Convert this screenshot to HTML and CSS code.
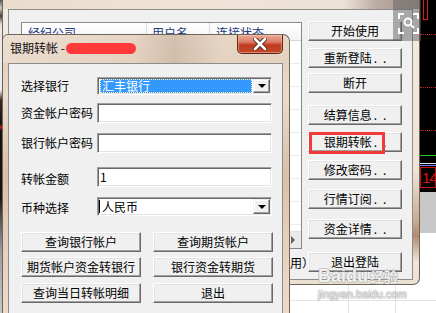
FILE: index.html
```html
<!DOCTYPE html>
<html lang="zh-CN">
<head>
<meta charset="utf-8">
<title>银期转帐</title>
<link rel="stylesheet" href="styles.css">
</head>
<body>
<div class="left-strip"></div>

<div class="chart">
  <div class="chart-top">
    <span class="c-mark"></span>
    <span class="c-dot d1"></span>
    <span class="c-dot d2"></span>
    <span class="c-dot d3"></span>
    <span class="c-green"></span>
    <span class="c-blue"></span>
  </div>
  <div class="chart-val">14</div>
  <div class="chart-grey"></div>
</div>

<div class="sheet"></div>

<div class="win back">
  <div class="back-panel">
    <div class="list-col">
      <div class="list">
        <div class="list-head">
          <span class="h1">经纪公司</span>
          <span class="h2">用户名</span>
          <span class="h3">连接状态</span>
        </div>
        <div class="list-body"></div>
        <div class="hscroll"><span class="hs-btn"><span class="hs-arrow"></span></span></div>
      </div>
      <div class="list-note">（可用）</div>
    </div>
    <div class="side">
      <button class="btn">开始使用</button>
      <button class="btn">重新登陆<span class="dots">..</span></button>
      <button class="btn">断开</button>
      <button class="btn">结算信息<span class="dots">..</span></button>
      <button class="btn">银期转帐<span class="dots">..</span></button>
      <button class="btn">修改密码<span class="dots">..</span></button>
      <button class="btn">行情订阅<span class="dots">..</span></button>
      <button class="btn">资金详情<span class="dots">..</span></button>
      <button class="btn">退出登陆</button>
    </div>
  </div>
</div>

<div class="highlight"></div>

<div class="zoom-icon">
  <svg width="28" height="41" viewBox="0 0 28 41">
    <g fill="none" stroke="#fff" stroke-width="2">
      <path d="M6 19 V14 H11"/>
      <path d="M20 14 H25 V19"/>
      <path d="M6 28 V33 H11"/>
      <path d="M20 33 H25 V28"/>
      <circle cx="15" cy="22" r="3.5"/>
      <path d="M17.5 24.5 L21 28"/>
    </g>
  </svg>
</div>

<div class="win dlg">
  <div class="dlg-title">
    <span class="dlg-name">银期转帐 -</span>
    <span class="redact"></span>
    <span class="close">
      <svg width="14" height="12" viewBox="0 0 14 12">
        <path d="M2 1 L12 11 M12 1 L2 11" stroke="#4a2a22" stroke-width="4.5" stroke-linecap="round"/>
        <path d="M2 1 L12 11 M12 1 L2 11" stroke="#fff" stroke-width="2.6" stroke-linecap="round"/>
      </svg>
    </span>
  </div>
  <div class="dlg-panel">
    <div class="form">
      <div class="row r1">
        <span class="lbl">选择银行</span>
        <div class="field combo"><span class="combo-val picked">汇丰银行</span><span class="drop"><span class="tri"></span></span></div>
      </div>
      <div class="row r2">
        <span class="lbl">资金帐户密码</span>
        <div class="field"></div>
      </div>
      <div class="row r3">
        <span class="lbl">银行帐户密码</span>
        <div class="field"></div>
      </div>
      <div class="row r4">
        <span class="lbl low">转帐金额</span>
        <div class="field text">1</div>
      </div>
      <div class="row r5">
        <span class="lbl low2">币种选择</span>
        <div class="field combo"><span class="combo-val plain">人民币</span><span class="drop"><span class="tri"></span></span></div>
      </div>
    </div>
    <div class="actions">
      <button class="btn">查询银行帐户</button>
      <button class="btn">查询期货帐户</button>
      <button class="btn">期货帐户资金转银行</button>
      <button class="btn">银行资金转期货</button>
      <button class="btn">查询当日转帐明细</button>
      <button class="btn">退出</button>
    </div>
  </div>
</div>

<div class="watermark">
  <div class="wm-main"><span class="wm-latin">Baidu</span><span class="wm-cjk">经验</span></div>
  <div class="wm-url">jingyan.baidu.com</div>
</div>
</body>
</html>
```

FILE: styles.css
```css
* { box-sizing: border-box; }
html, body { margin: 0; padding: 0; }
body {
  width: 436px;
  height: 313px;
  overflow: hidden;
  position: relative;
  background: #fff;
  font-family: "Noto Sans CJK SC", "Noto Sans", sans-serif;
  font-size: 12px;
  line-height: 14px;
  color: #000;
}

/* desktop bits */
.left-strip {
  position: absolute; left: 0; top: 0; width: 4px; height: 313px;
  background: linear-gradient(to bottom, #555 0, #ccc 8px, #444 16px, #ddd 24px, #e8e8e8 30px, #eee 90px, #3a2a22 100px, #111 124px, #c02020 127px, #111 131px, #1a1410 198px, #4a4a52 215px, #9a9aa0 250px, #c8c8c8 313px);
}

.chart {
  position: absolute; left: 420px; top: 0; width: 16px; height: 313px;
  display: flex; flex-direction: column; background: #fff;
}
.chart-top { position: relative; height: 167px; background: #000; flex: none; }
.c-mark { position: absolute; left: 3px; top: 0; width: 5px; height: 20px; border: 1px solid #e02020; border-top: none; }
.c-dot { position: absolute; left: 0; right: 0; height: 0; border-top: 1px dotted #d02020; }
.d1 { top: 34px; }
.d2 { top: 87px; }
.d3 { top: 130px; }
.c-green { position: absolute; left: 0; right: 0; top: 155px; height: 1px; background: #20d020; }
.c-blue { position: absolute; left: 0; right: 0; top: 163px; height: 3px; background: linear-gradient(#dcdcff 0 1px, #000 1px 2px, #7a7aff 2px 3px); }
.chart-val {
  height: 21px; flex: none; background: #000; border: 1px solid #d01010;
  color: #e01010; font-family: "Liberation Sans", sans-serif; font-size: 15px; line-height: 19px;
  letter-spacing: -1px; padding-left: 1px; overflow: hidden; white-space: nowrap;
}
.chart-grey { height: 45px; flex: none; background: #c8c8c8; border-top: 4px solid #000; }

.sheet {
  position: absolute; left: 283px; top: 284px; width: 153px; height: 29px;
  background-color: #fff;
  background-image: linear-gradient(#e4e4e4, #e4e4e4), linear-gradient(#e4e4e4, #e4e4e4), linear-gradient(#e4e4e4, #e4e4e4);
  background-size: 1px 100%, 1px 100%, 100% 1px;
  background-position: 65px 0, 112px 0, 0 16px;
  background-repeat: no-repeat;
}

/* generic controls */
.btn {
  font: inherit; font-size: 12px; line-height: 14px; color: #000;
  background: #f0f0f0;
  border: 1px solid; border-color: #fff #696969 #696969 #fff;
  box-shadow: inset -1px -1px #a0a0a0, inset 1px 1px #e3e3e3;
  padding: 0; margin: 0;
  display: flex; align-items: center; justify-content: center;
  white-space: nowrap; height: 20px;
}
.dots { letter-spacing: 6px; margin-left: 2px; margin-right: -6px; }

.field {
  height: 100%; background: #fff;
  border: 1px solid; border-color: #a0a0a0 #fff #fff #a0a0a0;
  box-shadow: inset 1px 1px #696969, inset -1px -1px #e3e3e3;
}

/* back window */
.back {
  position: absolute; left: 2px; top: 0; width: 418px; height: 285px;
  padding: 9px 6px 4px 5px;
  border: 1px solid #6f6358; border-top: none;
  border-radius: 0 0 7px 7px;
  background:
    linear-gradient(90deg, #eadccd 0, #efe3d6 40%, #ede2d6 82%, #b9aaa2 90%, #a8968e 100%) top / 100% 9px no-repeat,
    linear-gradient(to bottom, #f3ebe0 0, #efe4d6 60%, #c9ab90 78%, #b08a6e 83%, #efe4d6 92%, #ece0d2 100%);
}
.back-panel {
  height: 100%; background: #f0f0f0;
  border: 1px solid #8c8c8c;
  display: flex; padding: 11px 0 0 12px;
}
.list-col { width: 281px; flex: none; margin-top: 1px; display: flex; flex-direction: column; }
.list { height: 227px; border: 1px solid #828790; background: #fff; display: flex; flex-direction: column; }
.list-head { height: 18px; display: flex; background: linear-gradient(#fff, #f2f3f5); border-bottom: 1px solid #d5d5d5; flex: none; }
.list-head span { height: 100%; border-right: 1px solid #dcdcdc; padding: 3px 0 0 6px; color: #1e3a7c; white-space: nowrap; }
.h1 { width: 125px; }
.h2 { width: 63px; padding-left: 5px !important; }
.h3 { flex: 1; border-right: none !important; }
.list-body { flex: 1; background: repeating-linear-gradient(to bottom, transparent 0 22px, #ececec 22px 23px); }
.hscroll { height: 17px; flex: none; background: #eaeaea; border-top: 1px solid #dedede; display: flex; justify-content: flex-end; }
.hs-btn { width: 17px; height: 100%; display: flex; align-items: center; justify-content: center; }
.hs-arrow { width: 0; height: 0; border-left: 4px solid #606060; border-top: 4px solid transparent; border-bottom: 4px solid transparent; }
.list-note { margin-top: 7px; margin-right: -12px; text-align: right; white-space: nowrap; }

.side { width: 94px; margin-left: 6px; display: flex; flex-direction: column; flex: none; }
.side .btn { flex: none; }
.side .btn:nth-child(2) { margin-top: 7px; }
.side .btn:nth-child(3) { margin-top: 5px; }
.side .btn:nth-child(4) { margin-top: 12px; }
.side .btn:nth-child(5) { margin-top: 7px; }
.side .btn:nth-child(6) { margin-top: 8px; }
.side .btn:nth-child(7) { margin-top: 9px; }
.side .btn:nth-child(8) { margin-top: 10px; }
.side .btn:nth-child(9) { margin-top: 13px; }

.highlight {
  position: absolute; left: 309px; top: 132px; width: 76px; height: 22px;
  border: 3px solid #f23a3a;
}

.zoom-icon {
  position: absolute; left: 393px; top: 0; width: 28px; height: 41px;
  background: rgba(95, 95, 95, 0.5);
}
.zoom-icon svg { display: block; }

/* front dialog */
.dlg {
  position: absolute; left: 2px; top: 34px; width: 288px; height: 290px;
  border: 1px solid #6f6358; border-bottom: none;
  border-radius: 6px 7px 0 0;
  background: linear-gradient(to bottom, #e7d6c5 0, #e4d2c0 30px, #ebdccd 60px, #d9bfa8 140px, #e6cfba 200px, #ecdccb 290px);
  display: flex; flex-direction: column;
}
.dlg-title {
  height: 28px; flex: none; display: flex; align-items: flex-start;
  background: linear-gradient(90deg, rgba(255,255,255,0.2) 0, rgba(255,255,255,0) 45%, rgba(120,90,70,0.18) 60%, rgba(120,90,70,0) 76%);
}
.dlg-name { margin: 6px 0 0 7px; white-space: pre; color: #111; }
.redact { width: 70px; height: 11px; margin: 8px 0 0 1px; background: #ff3a3a; border-radius: 6px; }
.close {
  margin-left: auto; margin-right: 6px; width: 46px; height: 19px;
  border: 1px solid #5a2418; border-top: none; border-radius: 0 0 5px 5px;
  background: linear-gradient(#eaaa98 0, #dc7a62 40%, #c13b1f 55%, #c54828 100%);
  box-shadow: inset 0 0 0 1px rgba(255,210,190,0.45);
  display: flex; align-items: center; justify-content: center;
}
.close svg { display: block; }

.dlg-panel {
  flex: 1; margin: 0 6px 0 5px;
  background: #f0f0f0; border: 1px solid #8c8c8c; border-bottom: none;
  padding: 13px 0 0 12px;
}
.form { display: flex; flex-direction: column; }
.row { display: grid; grid-template-columns: 76px 175px; align-items: center; }
.r1 { height: 18px; }
.r2 { height: 20px; margin-top: 8px; }
.r3 { height: 20px; margin-top: 10px; }
.r4 { height: 20px; margin-top: 14px; }
.r5 { height: 19px; margin-top: 10px; }
.lbl { white-space: nowrap; }
.low { margin-top: 3px; }
.low2 { margin-top: 2px; }

.text { padding: 2px 0 0 2px; }
.combo { display: flex; padding: 1px; }
.combo-val { flex: 1; white-space: nowrap; }
.picked { margin: 0 1px 0 1px; background: #3399ff; color: #fff; padding-left: 2px; outline: 1px dotted #fff8c0; outline-offset: -1px; }
.plain { padding-left: 2px; border-left: 1px solid #000; margin: 1px 0 1px 0; line-height: 13px; }
.drop {
  width: 17px; flex: none;
  background: #f0f0f0;
  border: 1px solid; border-color: #f0f0f0 #696969 #696969 #f0f0f0;
  box-shadow: inset -1px -1px #a0a0a0, inset 1px 1px #fff;
  display: flex; align-items: center; justify-content: center;
}
.tri { width: 0; height: 0; border-top: 4px solid #000; border-left: 4px solid transparent; border-right: 4px solid transparent; }

.actions {
  margin-top: 16px;
  display: grid; grid-template-columns: 120px 120px; column-gap: 12px; row-gap: 5px;
  grid-auto-rows: 20px;
}
.actions .btn:nth-child(n+5) { margin-top: 1px; }

/* watermark */
.watermark {
  position: absolute; left: 318px; top: 266px; width: 100px;
  color: rgba(255,255,255,0.85);
  text-shadow: 1px 0 0 rgba(150,150,150,0.45), -1px 0 0 rgba(150,150,150,0.45), 0 1px 0 rgba(150,150,150,0.45), 0 -1px 0 rgba(150,150,150,0.45);
  pointer-events: none;
}
.wm-main { display: flex; align-items: baseline; height: 20px; }
.wm-latin { font-family: "Liberation Sans", sans-serif; font-weight: bold; font-size: 18px; line-height: 20px; }
.wm-cjk { font-weight: bold; font-size: 14px; line-height: 20px; margin-left: 2px; }
.wm-url { font-family: "Liberation Sans", sans-serif; font-size: 11px; line-height: 13px; margin-top: 2px; color: rgba(240,240,240,0.8); }
```
